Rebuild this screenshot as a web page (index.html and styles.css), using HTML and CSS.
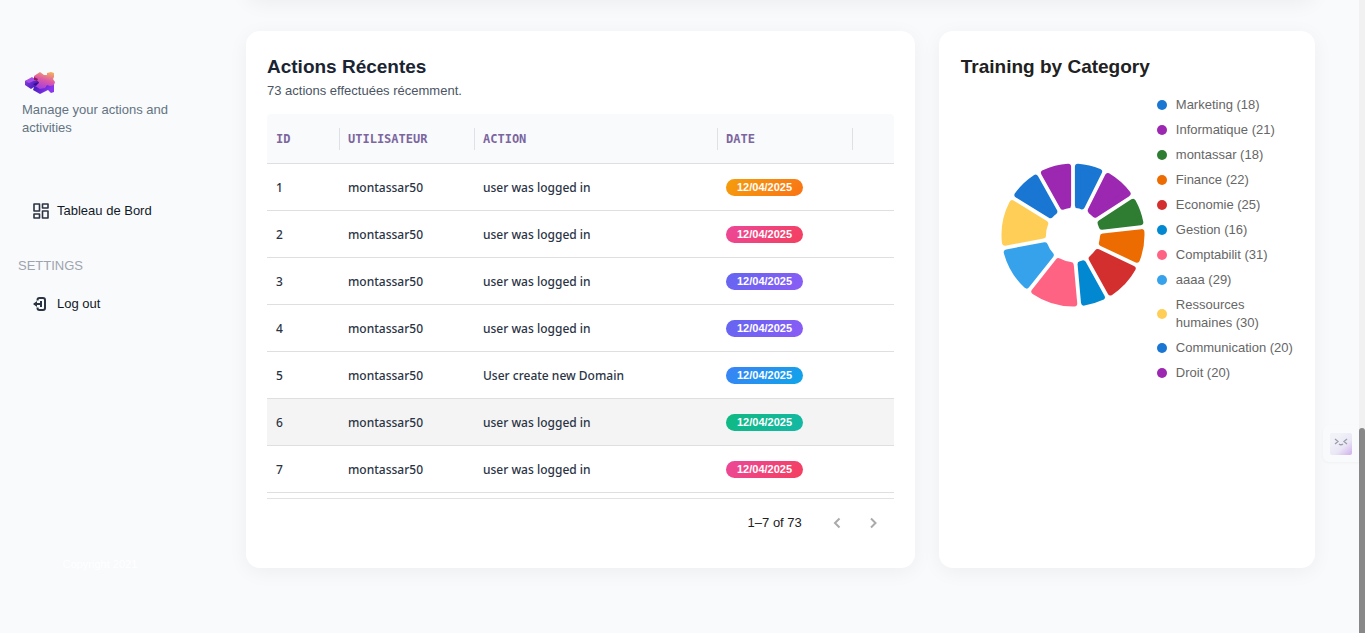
FILE: index.html
```html
<!DOCTYPE html>
<html lang="fr">
<head>
<meta charset="utf-8">
<title>Tableau de Bord</title>
<link rel="stylesheet" href="styles.css">
</head>
<body>
<div class="app">
  <aside class="sidebar">
    <div class="brand">
      <svg class="logo" viewBox="0 0 30 22" aria-hidden="true">
        <defs>
          <linearGradient id="top" x1="0.8" y1="0" x2="0.4" y2="1">
            <stop offset="0" stop-color="#f5b25c"/><stop offset=".5" stop-color="#dd5aa6"/><stop offset="1" stop-color="#a63fdc"/>
          </linearGradient>
          <linearGradient id="side" x1="0" y1="0" x2="1" y2="0.4">
            <stop offset="0" stop-color="#8b3fe0"/><stop offset=".5" stop-color="#4a1cc0"/><stop offset="1" stop-color="#8a35ee"/>
          </linearGradient>
        </defs>
        <path fill="url(#side)" d="M0 9 L7 6 L14 8 L28 9 L29 12 L29 20 L26 21 L23 18 L15 22 L8 18 L9 15 L6 17 L0 13Z"/>
        <path fill="url(#top)" d="M9 4 L15 0 L19 3 L22 3 L22 1 L26 0 L29 1 L29 5 L28 7 L30 10 L29 13 L25 14 L22 13 L20 16 L15 17 L10 14 L14 11 L13 9 L9 9Z"/>
        <path fill="#a94fe8" d="M0 9 L7 5 L11 8 L4 11Z"/>
        <path fill="#8b1b5c" d="M9 5 L13 7 L12 9 L9 8Z"/>
        <path fill="#34108c" d="M8 12l6-2-3 4z"/>
      </svg>
      <p class="tagline">Manage your actions and activities</p>
    </div>
    <nav class="nav">
      <a class="nav-link" href="#dashboard">
        <svg class="icon" viewBox="0 0 16 16" aria-hidden="true"><path d="M1 1h5.500v7H1zM9.500 1H15v4H9.500zM9.500 8H15v7H9.500zM1 11h5.500v4H1z"/></svg>
        Tableau de Bord
      </a>
      <h2 class="nav-title">SETTINGS</h2>
      <a class="nav-link" href="#logout">
        <svg class="icon icon-logout" viewBox="0 0 16 16" aria-hidden="true"><path d="M4.500 4.500V4q0-2 2-2h3.500q2 0 2 2v8q0 2-2 2H6.500q-2 0-2-2v-.500M1 8h8M8 5v6"/><path d="M0 8l4-3v6z" class="arrow"/></svg>
        Log out
      </a>
    </nav>
    <p class="copyright">Copyright 2021</p>
  </aside>

  <main class="main">
    <div class="card card-previous"></div>
    <div class="cards">
      <section class="card">
        <h1 class="card-title title-navy">Actions Récentes</h1>
        <p class="subtitle">73 actions effectuées récemment.</p>
        <table class="actions">
          <colgroup><col class="col-id"><col class="col-user"><col class="col-action"><col class="col-date"><col></colgroup>
          <thead>
            <tr><th><span>ID</span></th><th><span>UTILISATEUR</span></th><th><span>ACTION</span></th><th><span>DATE</span></th><td></td></tr>
          </thead>
          <tbody>
            <tr><td>1</td><td>montassar50</td><td>user was logged in</td><td><span class="chip orange">12/04/2025</span></td><td></td></tr>
            <tr><td>2</td><td>montassar50</td><td>user was logged in</td><td><span class="chip pink">12/04/2025</span></td><td></td></tr>
            <tr><td>3</td><td>montassar50</td><td>user was logged in</td><td><span class="chip violet">12/04/2025</span></td><td></td></tr>
            <tr><td>4</td><td>montassar50</td><td>user was logged in</td><td><span class="chip violet">12/04/2025</span></td><td></td></tr>
            <tr><td>5</td><td>montassar50</td><td>User create new Domain</td><td><span class="chip blue">12/04/2025</span></td><td></td></tr>
            <tr class="hovered"><td>6</td><td>montassar50</td><td>user was logged in</td><td><span class="chip green">12/04/2025</span></td><td></td></tr>
            <tr><td>7</td><td>montassar50</td><td>user was logged in</td><td><span class="chip pink">12/04/2025</span></td><td></td></tr>
          </tbody>
        </table>
        <div class="pagination">
          <span>1–7 of 73</span>
          <div class="pages">
            <button type="button" aria-label="Previous page" disabled><svg viewBox="0 0 20 20" aria-hidden="true"><path d="M12.500 5.500 8 10l4.500 4.500"/></svg></button>
            <button type="button" aria-label="Next page"><svg viewBox="0 0 20 20" aria-hidden="true"><path d="M8 5.500 12.500 10 8 14.500"/></svg></button>
          </div>
        </div>
      </section>

      <section class="card">
        <h1 class="card-title">Training by Category</h1>
        <div class="chart">
          <svg class="donut" id="donut" viewBox="-72 -72 144 144" role="img" aria-label="Training by Category"></svg>
          <ul class="legend" id="legend">
            <li data-value="18" class="c-blue">Marketing (18)</li>
            <li data-value="21" class="c-purple">Informatique (21)</li>
            <li data-value="18" class="c-green">montassar (18)</li>
            <li data-value="22" class="c-orange">Finance (22)</li>
            <li data-value="25" class="c-red">Economie (25)</li>
            <li data-value="16" class="c-cyan">Gestion (16)</li>
            <li data-value="31" class="c-pink">Comptabilit (31)</li>
            <li data-value="29" class="c-sky">aaaa (29)</li>
            <li data-value="30" class="c-yellow">Ressources humaines (30)</li>
            <li data-value="20" class="c-blue">Communication (20)</li>
            <li data-value="20" class="c-purple">Droit (20)</li>
          </ul>
        </div>
      </section>
    </div>
  </main>
  <div class="scrollbar"><div class="thumb"></div></div>
  <button class="assistant" type="button" aria-label="Assistant">
    <svg viewBox="0 0 22 22" aria-hidden="true">
      <defs><linearGradient id="face" x1="0.3" y1="0.2" x2="1" y2="1"><stop offset="0" stop-color="#f0f2f8"/><stop offset=".5" stop-color="#eae6f5"/><stop offset="1" stop-color="#cfaeec"/></linearGradient></defs>
      <rect width="22" height="22" rx="2" fill="url(#face)"/>
      <path d="M5 6l3 2.500-3 2.500M17 6l-3 2.500 3 2.500M9 11q2 1.500 4 0" fill="none" stroke="#9a9eab" stroke-width="1.300"/>
    </svg>
  </button>
</div>
<script src="chart.js"></script>
</body>
</html>
```
FILE: chart.js
```js
// Draws the donut from the legend's values.
(function () {
  var OUTER = 71.5, INNER = 27, GAP = 3.8, PAD = 0.05, ROUND = 3;
  var items = Array.from(document.querySelectorAll('#legend li'));
  var total = items.reduce(function (sum, li) { return sum + Number(li.dataset.value); }, 0);
  var free = 2 * Math.PI - PAD * items.length;
  var svg = document.getElementById('donut');
  var outer = OUTER - ROUND, inner = INNER + ROUND, inset = GAP / 2 + ROUND;

  function point(radius, angle) {
    return (radius * Math.sin(angle)).toFixed(2) + ' ' + (-radius * Math.cos(angle)).toFixed(2);
  }

  var start = 0;
  items.forEach(function (li) {
    var end = start + Number(li.dataset.value) / total * free + PAD;
    var padOut = Math.asin(inset / outer), padIn = Math.asin(inset / inner);
    var path = document.createElementNS('http://www.w3.org/2000/svg', 'path');
    path.setAttribute('d',
      'M' + point(outer, start + padOut) +
      'A' + outer + ' ' + outer + ' 0 0 1 ' + point(outer, end - padOut) +
      'L' + point(inner, end - padIn) +
      'A' + inner + ' ' + inner + ' 0 0 0 ' + point(inner, start + padIn) + 'Z');
    path.setAttribute('class', li.className);
    path.setAttribute('stroke-width', ROUND * 2);
    svg.appendChild(path);
    start = end;
  });
})();
```
FILE: styles.css
```css
* { box-sizing: border-box; }

body {
  margin: 0;
  background: #f9fafc;
  color: #212121;
  font: 13px/18px "Liberation Sans", Arial, sans-serif;
}

h1, h2, p, ul { margin: 0; padding: 0; }

.app {
  position: relative;
  display: flex;
  min-height: 100vh;
  overflow: hidden;
}

.sidebar {
  display: flex;
  flex-direction: column;
  flex: 0 0 200px;
  padding: 72px 18px 60px;
}

.brand { padding-left: 4px; }
.logo { display: block; width: 30px; height: 22px; margin: 0 0 7px 3px; }
.tagline { color: #637381; }

.nav { margin-top: 64px; }
.nav-link {
  display: flex;
  align-items: center;
  gap: 8px;
  height: 20px;
  padding-left: 15px;
  color: #111927;
  text-decoration: none;
}
.icon {
  width: 16px;
  height: 16px;
  fill: none;
  stroke: #2b3442;
  stroke-width: 1.6;
  stroke-linejoin: round;
}
.icon-logout { stroke-width: 2; }
.arrow { fill: #2b3442; stroke: none; }
.nav-title {
  margin: 36px 0 19px;
  color: #9da4ae;
  font-size: 13px;
  font-weight: 400;
}
.copyright {
  margin-top: auto;
  color: #ffffff;
  font-size: 11px;
  text-align: center;
}

.main {
  flex: 1;
  min-width: 0;
  padding: 0 44px 64px 46px;
}

.card {
  padding: 24px 21px 21px;
  border-radius: 14px;
  background: #ffffff;
  box-shadow: 0 4px 20px rgba(0, 0, 0, 0.05);
}
.card-previous {
  height: 60px;
  margin: -60px 0 31px;
}
.cards {
  display: grid;
  grid-template-columns: 16fr 9fr;
  gap: 24px;
}
.card-title {
  font-size: 19px;
  line-height: 24px;
}
.title-navy { color: #1a2433; }
.subtitle {
  margin: 3px 0 14px;
  color: #4b5563;
}

.actions {
  width: 100%;
  table-layout: fixed;
  border-collapse: separate;
  border-spacing: 0;
}
.col-id { width: 73px; }
.col-user { width: 135px; }
.col-action { width: 243px; }
.col-date { width: 135px; }

.actions th, .actions td {
  height: 47px;
  padding: 2px 0 0 9px;
  border-bottom: 1px solid #dfdfdf;
  color: #2b3445;
  font: 500 12px/18px "Noto Sans", sans-serif;
  text-align: left;
}
.actions td + td, .actions th + th { padding-left: 8px; }
.actions td:nth-child(4) { padding-top: 0; }
.actions thead th, .actions thead td {
  height: 50px;
  padding-top: 0;
  background: #f9fafc;
}
.actions thead th {
  color: #7b669f;
  font: 700 12px/22px "DejaVu Sans Mono", monospace;
}
.actions thead th:first-child { border-top-left-radius: 4px; }
.actions thead td { border-top-right-radius: 4px; }
.actions th span {
  display: block;
  border-right: 1px solid #dfe1e4;
}
.hovered td { background: #f4f4f4; }

.chip {
  display: block;
  width: 77px;
  border-radius: 9px;
  color: #ffffff;
  font: 700 11px/17px "Liberation Sans", Arial, sans-serif;
  text-align: center;
}
.orange { background: linear-gradient(135deg, #f59e0b, #f97316); }
.pink { background: linear-gradient(135deg, #ec4899, #f43f5e); }
.violet { background: linear-gradient(135deg, #6366f1, #8b5cf6); }
.blue { background: linear-gradient(135deg, #3b82f6, #0ea5e9); }
.green { background: linear-gradient(135deg, #10b981, #14b8a6); }

.pagination {
  display: flex;
  align-items: center;
  justify-content: flex-end;
  gap: 25px;
  height: 48px;
  margin: 5px 0 1px;
  padding-right: 11px;
  border-top: 1px solid #e2e2e2;
}
.pages { display: flex; gap: 16px; }
.pages button {
  width: 20px;
  height: 20px;
  padding: 0;
  border: 0;
  background: none;
}
.pages svg {
  display: block;
  fill: none;
  stroke: #aaaaaa;
  stroke-width: 2;
}

.cards > .card:last-child { padding: 24px 22px; }
.chart {
  display: flex;
  align-items: center;
  margin-top: 17px;
}
.donut {
  flex: 0 0 144px;
  margin: 0 12px 8px 40px;
}
.donut path { fill: currentColor; stroke: currentColor; stroke-linejoin: round; }

.legend {
  display: grid;
  flex: 1;
  gap: 7px;
  list-style: none;
}
.legend li {
  display: flex;
  align-items: center;
  gap: 9px;
}
.legend li::before {
  flex: none;
  width: 10px;
  height: 10px;
  border-radius: 50%;
  background: currentColor;
  content: "";
}
.legend li { -webkit-text-fill-color: #666666; }

.c-blue { color: #1976d2; }
.c-purple { color: #9c27b0; }
.c-green { color: #2e7d32; }
.c-orange { color: #ed6c02; }
.c-red { color: #d32f2f; }
.c-cyan { color: #0288d1; }
.c-pink { color: #ff6384; }
.c-sky { color: #36a2eb; }
.c-yellow { color: #ffce56; }

.scrollbar {
  display: flex;
  flex: 0 0 6px;
  flex-direction: column;
  justify-content: flex-end;
  background: #f1f1f1;
}
.thumb {
  height: 205px;
  border-radius: 3px 3px 0 0;
  background: #888888;
}

.assistant {
  position: absolute;
  right: 6px;
  bottom: 171px;
  width: 36px;
  height: 37px;
  padding: 0 0 0 7px;
  border: 0;
  border-radius: 6px 0 0 6px;
  background: #f9fafc;
  box-shadow: 0 1px 3px rgba(0, 0, 0, 0.04);
}
.assistant svg { display: block; width: 22px; height: 22px; }
```
